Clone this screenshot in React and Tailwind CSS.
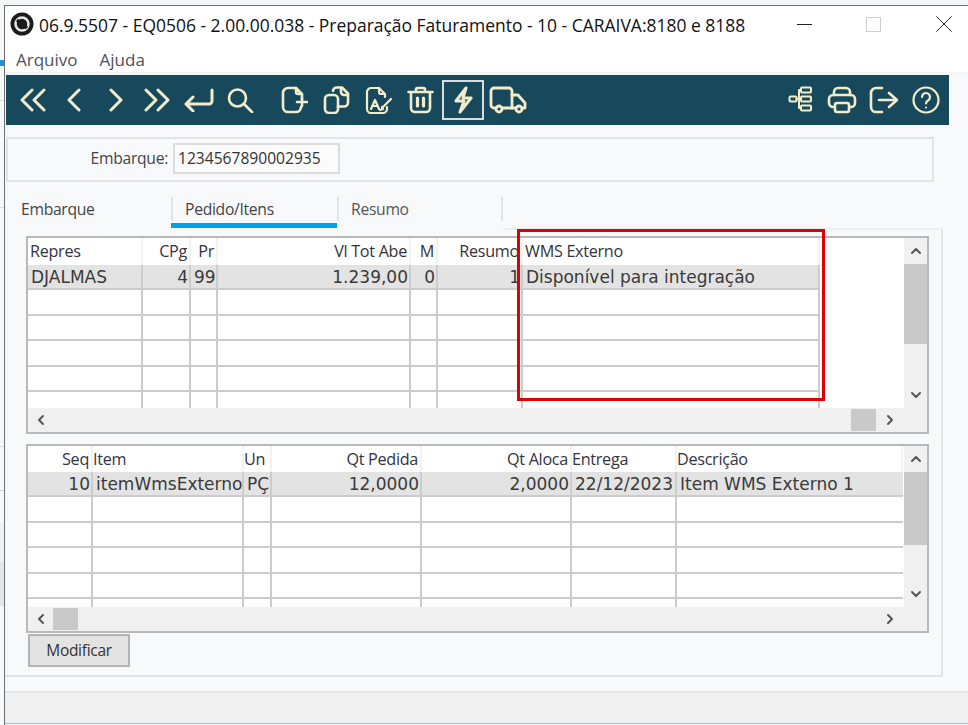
import { ChevronUp, ChevronDown, ChevronLeft, ChevronRight } from 'lucide-react'

const Ico = ({ w = 28, h = 28, sw = 3, children }) => (
  <svg width={w} height={h} viewBox={`0 0 ${w} ${h}`} fill="none" stroke="currentColor" strokeWidth={sw} strokeLinecap="round" strokeLinejoin="round">
    {children}
  </svg>
)

const toolbarLeft = [
  <Ico w={28} h={24}><path d="M13 2 3 12l10 10M25 2 15 12l10 10" /></Ico>,
  <Ico w={16} h={24}><path d="M13 2 3 12l10 10" /></Ico>,
  <Ico w={16} h={24}><path d="m3 2 10 10L3 22" /></Ico>,
  <Ico w={28} h={24}><path d="m3 2 10 10L3 22M15 2l10 10-10 10" /></Ico>,
  <Ico w={32} h={24}><path d="M29 2v11a3 3 0 0 1-3 3H3M10 9l-7 7 7 7" /></Ico>,
  <Ico w={28} h={26} sw={2.6}><circle cx="11.5" cy="11" r="8.5" /><path d="m18 17 8 8" /></Ico>,
]

const toolbarDocs = [
  <Ico w={27} h={28} sw={2.6}><path d="M15 2H7a5 5 0 0 0-5 5v14a5 5 0 0 0 5 5h8a5 5 0 0 0 5-5" /><path d="m15 2 6 6v5M15 2v4a2 2 0 0 0 2 2h4" /><path d="M16 16h10M21 12v8" /></Ico>,
  <Ico w={27} h={28} sw={2.6}><rect x="2" y="9" width="13" height="18" rx="4" /><path d="M10 5a4 4 0 0 1 4-3.5h5l6 6v9a4 4 0 0 1-4 4h-6" /><path d="M18 2v4a3 3 0 0 0 3 3h4" /></Ico>,
  <Ico w={28} h={28} sw={2.2}><path d="M14 2H6a4 4 0 0 0-4 4v17a4 4 0 0 0 4 4h12a4 4 0 0 0 4-4v-2" /><path d="m14 2 6 6v3M14 2v4a2 2 0 0 0 2 2h4" /><path d="m6 23 4-9 4 9M7.5 20h5" /><path d="m17 22 9-9M15 24l3-1-1-2" /></Ico>,
  <Ico w={27} h={28} sw={2.6}><path d="M1.5 6h24M9 6V3.5A1.5 1.5 0 0 1 10.5 2h6A1.5 1.5 0 0 1 18 3.5V6M4 6v16a4 4 0 0 0 4 4h11a4 4 0 0 0 4-4V6" /><path d="M10.5 12v8M16.5 12v8" strokeWidth="3.2" /></Ico>,
]

const toolbarRight = [
  <Ico w={25} h={26} sw={2}><rect x="13" y="1.5" width="10" height="5" rx="1" /><rect x="13" y="10.5" width="10" height="5" rx="1" /><rect x="13" y="19.5" width="10" height="5" rx="1" /><rect x="1.5" y="10.5" width="7" height="5" rx="1" /><path d="M8.5 13H13M11 4h2M11 22h2M11 4v18" /></Ico>,
  <Ico w={30} h={28} sw={2.6}><path d="M7 9V6a4 4 0 0 1 4-4h8a4 4 0 0 1 4 4v3" /><path d="M7 21H6a4 4 0 0 1-4-4v-4a4 4 0 0 1 4-4h18a4 4 0 0 1 4 4v4a4 4 0 0 1-4 4h-1" /><rect x="8" y="17" width="14" height="9" rx="2" /></Ico>,
  <Ico w={30} h={28} sw={2.6}><path d="M13 2H7a5 5 0 0 0-5 5v14a5 5 0 0 0 5 5h6" /><path d="M10 14h17M20 7l8 7-8 7" /></Ico>,
  <Ico w={28} h={28} sw={2.2}><circle cx="14" cy="14" r="12.5" /><path d="M10 11a4 4 0 1 1 6 3.5c-1.5.8-2 1.5-2 3" /><path d="M14 21.5v0" /></Ico>,
]

const grid1Cols = [115, 48, 27, 193, 27, 85, 297]
const grid2Cols = [65, 151, 28, 150, 150, 105, 226]

const Row = ({ cols, height, bg = '', line = true, edge, children }) => (
  <div className={`flex w-fit shrink-0 ${bg} ${line ? 'border-b-2 border-[#cccccc]' : ''}`} style={{ height }}>
    {cols.map((w, i) => (
      <div key={i} className={`shrink-0 h-full border-[#cccccc] ${i < cols.length - 1 || edge ? 'border-r-2' : ''}`} style={{ width: w }}>
        {children ? children[i] : null}
      </div>
    ))}
  </div>
)

const Head = ({ right, tight, children }) => (
  <div className={`h-full flex items-center text-[16.2px] tracking-[-0.3px] text-[#33333d] whitespace-nowrap ${right ? 'justify-end pr-[2px]' : tight ? 'pl-0' : 'pl-[2px]'}`}>{children}</div>
)
const Val = ({ right, children }) => (
  <div className={`h-full flex items-center pt-[2px] whitespace-nowrap font-['DejaVu_Sans'] text-[17px] text-[#3a3a3a] ${right ? 'justify-end pr-[1px]' : 'pl-[3px]'}`}>{children}</div>
)

const Grid = ({ cols, labels, values, h, headH, thumbH, thumbV, last, edge, tight }) => (
  <div className="w-[903px] border-2 border-[#b9b9b9] bg-[#f0f0f0] flex" style={{ height: h }}>
    <div className="w-[876px] flex flex-col">
      <div className="flex-1 bg-white overflow-hidden flex flex-col">
        <div className="flex shrink-0" style={{ height: headH }}>
          {cols.map((w, i) => (
            <div key={i} className="shrink-0 border-r-2 border-[#f2f2f2]" style={{ width: w }}>
              <Head right={labels[i].r} tight={tight}>{labels[i].t}</Head>
            </div>
          ))}
        </div>
        <Row cols={cols} edge={edge} height={25} bg="bg-[#e3e3e3]">{values.map((v, i) => <Val key={i} right={v.r}>{v.t}</Val>)}</Row>
        <Row cols={cols} edge={edge} height={26} />
        <Row cols={cols} edge={edge} height={25} />
        <Row cols={cols} edge={edge} height={26} />
        <Row cols={cols} edge={edge} height={25} />
        <Row cols={cols} edge={edge} height={last} line={false} />
      </div>
      <div className="h-[24px] flex items-center justify-between text-[#555555]">
        <div className="flex items-center">
          <div className="w-[25px] flex justify-center"><ChevronLeft size={16} strokeWidth={3} /></div>
          {thumbH === 'left' && <div className="w-[25px] h-[22px] bg-[#c9c9c9]" />}
        </div>
        <div className="flex items-center">
          {thumbH === 'right' && <div className="w-[25px] h-[22px] bg-[#c9c9c9]" />}
          <div className="w-[28px] flex justify-center"><ChevronRight size={16} strokeWidth={3} /></div>
        </div>
      </div>
    </div>
    <div className="w-[23px] flex flex-col items-center">
      <div className="h-[26px] flex items-center text-[#555555]"><ChevronUp size={16} strokeWidth={3} /></div>
      <div className="w-[23px] bg-[#c9c9c9]" style={{ height: thumbV }} />
      <div className="flex-1" />
      <div className="h-[50px] pt-[5px] text-[#555555]"><ChevronDown size={16} strokeWidth={3} /></div>
    </div>
  </div>
)

export default function App() {
  return (
    <div className="relative w-[968px] h-[725px] overflow-hidden bg-[#f8f9fb] font-['Open_Sans',sans-serif] flex flex-col">
      <div className="h-[5px] shrink-0 bg-[#f4f5f7]" />

      {/* what shows of the window behind */}
      <div className="absolute left-0 top-0 w-[4px] h-full overflow-hidden">
        <div className="absolute top-[60px] w-full h-[6px] bg-[#1e90e0]" />
        <div className="absolute top-[100px] w-full h-px bg-[#dddddd]" />
        <div className="absolute top-[207px] w-full h-px bg-[#dddddd]" />
        <div className="absolute top-[446px] w-full h-px bg-[#dddddd]" />
        <div className="absolute top-[490px] w-full h-px bg-[#cccccc]" />
        <div className="absolute top-[522px] w-full h-[40px] bg-[#f0f1f3]" />
        <div className="absolute top-[562px] w-full h-[44px] bg-[#e3e6ea]" />
      </div>

      <div className="flex-1 ml-[4px] border-l border-t border-[#6e6e6e] flex flex-col min-h-0">

        {/* title and menu */}
        <div className="h-[66px] shrink-0 bg-white">
          <div className="h-[40px] flex items-center">
            <svg className="ml-[5px] mb-[4px] shrink-0" width="24" height="24" viewBox="0 0 24 24">
              <circle cx="12" cy="12" r="11.5" fill="#1b1b1b" />
              <circle cx="12" cy="12" r="6.5" fill="none" stroke="#e8e8e8" strokeWidth="2.5" />
              <path d="m7 8 10 8" stroke="#1b1b1b" strokeWidth="3.5" />
            </svg>
            <span className="ml-[5px] pb-[1px] text-[17.47px] text-[#111111] whitespace-nowrap">06.9.5507 - EQ0506 - 2.00.00.038 - Preparação Faturamento - 10 - CARAIVA:8180 e 8188</span>
            <div className="ml-auto flex items-center pr-[16px] pb-[4px]">
              <div className="w-[15px] h-px shrink-0 bg-[#222222] mr-[54px]" />
              <div className="w-[15px] h-[15px] shrink-0 border border-[#cfcfcf] mr-[55px]" />
              <svg className="shrink-0" width="16" height="16" viewBox="0 0 16 16" stroke="#222222" fill="none"><path d="m.5.5 15 15M15.5.5l-15 15" /></svg>
            </div>
          </div>
          <div className="flex pl-[11px] pt-[1px] gap-[22px] text-[17px] text-[#50505a]">
            <span>Arquivo</span>
            <span>Ajuda</span>
          </div>
        </div>
        <div className="h-[3px] shrink-0 bg-[#f4f5f7]" />

        {/* toolbar */}
        <div className="h-[50px] shrink-0 ml-px w-[943px] bg-[#18485c] text-[#f1edcb] flex items-center pl-[6px] pr-[2px]">
          {toolbarLeft.map((ic, i) => <div key={i} className="w-[41.5px] flex justify-center">{ic}</div>)}
          <div className="w-[12.5px]" />
          {toolbarDocs.map((ic, i) => <div key={i} className="w-[42px] flex justify-center">{ic}</div>)}
          <div className="w-[42px] h-[40px] border-2 border-[#d8dcdc] flex items-center justify-center">
            <Ico w={24} h={28}><path d="M15 2 5 15h8l-4 11 11-14h-8l3-10" /></Ico>
          </div>
          <div className="ml-[5px]">
            <Ico w={38} h={28} sw={2.8}>
              <path d="M7 22H5a3 3 0 0 1-3-3V5a3 3 0 0 1 3-3h15a3 3 0 0 1 3 3v17H13" />
              <path d="M23 9h6l7 8v5h-3M27 22h-4" />
              <circle cx="10" cy="23" r="3" /><circle cx="30" cy="23" r="3" />
            </Ico>
          </div>
          <div className="ml-auto flex">
            {toolbarRight.map((ic, i) => <div key={i} className="w-[42px] flex justify-center">{ic}</div>)}
          </div>
        </div>

        <div className="h-[12px] shrink-0" />

        {/* embarque field */}
        <div className="h-[45px] shrink-0 ml-px w-[928px] border-2 border-[#e2e3e5] flex items-center pb-[2px]">
          <span className="w-[160px] text-right text-[15.7px] tracking-[-0.3px] text-[#444444]">Embarque:</span>
          <div className="ml-[5px] w-[167px] h-[31px] border-2 border-[#dcdcdc] bg-[#fbfbfb] flex items-center pl-[3px] text-[15.6px] text-[#333333]">1234567890002935</div>
        </div>

        {/* tabs */}
        <div className="h-[48px] shrink-0 w-[938px] flex">
          <div className="w-[166px] h-[24px] mt-[15px] pl-[16px] pt-[2px] flex items-center text-[15.7px] tracking-[-0.3px] text-[#444444]">Embarque</div>
          <div className="w-[166px] h-[31px] mt-[15px] border-b-[5px] border-[#00a0e9]">
            <div className="h-[24px] border-l-2 border-[#e2e3e5] pl-[12px] pt-[2px] flex items-center text-[15.7px] tracking-[-0.3px] text-[#444444]">Pedido/Itens</div>
          </div>
          <div className="w-[166px] h-[24px] mt-[15px] border-x-2 border-[#e2e3e5] pl-[12px] pt-[2px] flex items-center text-[15.7px] tracking-[-0.3px] text-[#555555]">Resumo</div>
          <div className="flex-1 border-b-2 border-[#eceef0]" />
        </div>

        {/* grids */}
        <div className="h-[447px] shrink-0 w-[938px] border-r-2 border-b-2 border-[#e2e3e5] pt-[6px] pl-[21px]">
          <Grid
            h={198}
            headH={27}
            cols={grid1Cols}
            thumbH="right"
            thumbV={80}
            last={16}
            edge
            labels={[{ t: 'Repres' }, { t: 'CPg', r: true }, { t: 'Pr', r: true }, { t: 'Vl Tot Abe', r: true }, { t: 'M', r: true }, { t: 'Resumo', r: true }, { t: 'WMS Externo' }]}
            values={[{ t: 'DJALMAS' }, { t: '4', r: true }, { t: '99' }, { t: '1.239,00', r: true }, { t: '0', r: true }, { t: '1', r: true }, { t: 'Disponível para integração' }]}
          />
          <div className="h-[10px]" />
          <Grid
            h={189}
            headH={26}
            cols={grid2Cols}
            thumbH="left"
            thumbV={73}
            last={8}
            tight
            labels={[{ t: 'Seq', r: true }, { t: 'Item' }, { t: 'Un' }, { t: 'Qt Pedida', r: true }, { t: 'Qt Aloca', r: true }, { t: 'Entrega' }, { t: 'Descrição' }]}
            values={[{ t: '10', r: true }, { t: 'itemWmsExterno' }, { t: 'PÇ' }, { t: '12,0000', r: true }, { t: '2,0000', r: true }, { t: '22/12/2023' }, { t: 'Item WMS Externo 1' }]}
          />
          <button className="block mt-[1px] ml-[2px] w-[102px] h-[33px] border-2 border-[#b4b4b4] bg-[#e3e3e3] text-[15.5px] tracking-[-0.3px] text-[#333333]">Modificar</button>
        </div>

        {/* status bar */}
        <div className="h-[14px] shrink-0" />
        <div className="flex-1 bg-[#f0f0f0] border-t-2 border-[#e4e4e4] border-b border-b-[#b8b8b8]" />
        <div className="h-px shrink-0" />
      </div>

      {/* highlight drawn over the first grid */}
      <div className="absolute left-[517px] top-[229px] w-[308px] h-[172px] border-[3px] border-[#e00000] pointer-events-none" />
    </div>
  )
}
